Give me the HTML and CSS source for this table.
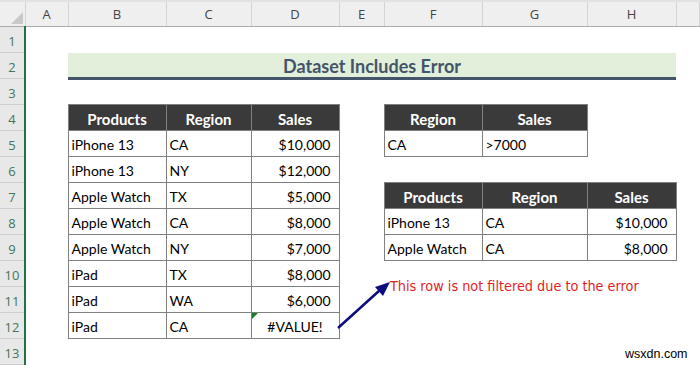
FILE: index.html
```html
<!DOCTYPE html>
<html>
  <head>
    <title>Dataset Includes Error</title>
    <link rel="stylesheet" href="styles.css">
  </head>
  <body>
    <div class="sheet-wrap">
      <table class="sheet">
        <colgroup>
          <col class="col-rows">
          <col class="col-a">
          <col class="col-b">
          <col class="col-c">
          <col class="col-d">
          <col class="col-e">
          <col class="col-f">
          <col class="col-g">
          <col class="col-h">
          <col>
        </colgroup>
        <thead>
          <tr class="col-heads">
            <th class="corner">
              <svg width="12" height="12" viewBox="0 0 12 12"><polygon points="12,0 12,12 0,12" fill="#c9c9c9"/></svg>
            </th>
            <th>A</th>
            <th>B</th>
            <th>C</th>
            <th>D</th>
            <th>E</th>
            <th>F</th>
            <th>G</th>
            <th>H</th>
            <th></th>
          </tr>
        </thead>
        <tbody>
          <tr>
            <th class="row-num">1</th>
            <td></td><td></td><td></td><td></td><td></td><td></td><td></td><td></td><td></td>
          </tr>
          <tr>
            <th class="row-num">2</th>
            <td></td>
            <td class="title" colspan="7">Dataset Includes Error</td>
            <td></td>
          </tr>
          <tr>
            <th class="row-num">3</th>
            <td></td><td></td><td></td><td></td><td></td><td></td><td></td><td></td><td></td>
          </tr>
          <tr>
            <th class="row-num">4</th>
            <td></td>
            <td class="head">Products</td>
            <td class="head">Region</td>
            <td class="head">Sales</td>
            <td></td>
            <td class="head">Region</td>
            <td class="head">Sales</td>
            <td></td><td></td>
          </tr>
          <tr>
            <th class="row-num">5</th>
            <td></td>
            <td class="cell">iPhone 13</td>
            <td class="cell">CA</td>
            <td class="cell money">$10,000</td>
            <td></td>
            <td class="cell">CA</td>
            <td class="cell">&gt;7000</td>
            <td></td><td></td>
          </tr>
          <tr>
            <th class="row-num">6</th>
            <td></td>
            <td class="cell">iPhone 13</td>
            <td class="cell">NY</td>
            <td class="cell money">$12,000</td>
            <td></td><td></td><td></td><td></td><td></td>
          </tr>
          <tr>
            <th class="row-num">7</th>
            <td></td>
            <td class="cell">Apple Watch</td>
            <td class="cell">TX</td>
            <td class="cell money">$5,000</td>
            <td></td>
            <td class="head">Products</td>
            <td class="head">Region</td>
            <td class="head">Sales</td>
            <td></td>
          </tr>
          <tr>
            <th class="row-num">8</th>
            <td></td>
            <td class="cell">Apple Watch</td>
            <td class="cell">CA</td>
            <td class="cell money">$8,000</td>
            <td></td>
            <td class="cell">iPhone 13</td>
            <td class="cell">CA</td>
            <td class="cell money">$10,000</td>
            <td></td>
          </tr>
          <tr>
            <th class="row-num">9</th>
            <td></td>
            <td class="cell">Apple Watch</td>
            <td class="cell">NY</td>
            <td class="cell money">$7,000</td>
            <td></td>
            <td class="cell">Apple Watch</td>
            <td class="cell">CA</td>
            <td class="cell money">$8,000</td>
            <td></td>
          </tr>
          <tr>
            <th class="row-num">10</th>
            <td></td>
            <td class="cell">iPad</td>
            <td class="cell">TX</td>
            <td class="cell money">$8,000</td>
            <td></td><td></td><td></td><td></td><td></td>
          </tr>
          <tr>
            <th class="row-num">11</th>
            <td></td>
            <td class="cell">iPad</td>
            <td class="cell">WA</td>
            <td class="cell money">$6,000</td>
            <td></td><td></td><td></td><td></td><td></td>
          </tr>
          <tr>
            <th class="row-num">12</th>
            <td></td>
            <td class="cell">iPad</td>
            <td class="cell">CA</td>
            <td class="cell error">#VALUE!</td>
            <td></td><td></td><td></td><td></td><td></td>
          </tr>
          <tr>
            <th class="row-num">13</th>
            <td></td><td></td><td></td><td></td><td></td><td></td><td></td><td></td><td></td>
          </tr>
        </tbody>
      </table>

      <!-- callout drawn over the sheet -->
      <svg class="arrow" width="700" height="365" viewBox="0 0 700 365">
        <line x1="338" y1="328" x2="380" y2="290" stroke="#0c0c7c" stroke-width="2.5"/>
        <polygon points="390,282 375,287 383,296" fill="#0c0c7c"/>
      </svg>
      <div class="note">This row is not filtered due to the error</div>
      <div class="watermark">wsxdn.com</div>
    </div>
  </body>
</html>
```

FILE: styles.css
```css
body {
  margin: 0;
  background-color: white;
  overflow: hidden;
}

.sheet-wrap {
  position: relative;
  width: 700px;
  height: 365px;
  overflow: hidden;
}

.sheet {
  border-collapse: collapse;
  table-layout: fixed;
  width: 700px;
  font-family: Lato, "Liberation Sans", sans-serif;
}

.col-rows { width: 25px; }
.col-a { width: 43px; }
.col-b { width: 98px; }
.col-c { width: 85px; }
.col-d { width: 88px; }
.col-e { width: 45px; }
.col-f { width: 98px; }
.col-g { width: 105px; }
.col-h { width: 89px; }

.sheet tbody tr {
  height: 26px;
}

.col-heads th {
  height: 24px;
  padding: 0;
  line-height: 16px;
  background-color: rgb(239, 239, 239);
  border-top: 2px solid rgb(226, 226, 226);
  border-right: 1px solid rgb(212, 212, 212);
  border-bottom: 1px solid rgb(171, 171, 171);
  font-family: "Open Sans", sans-serif;
  font-weight: normal;
  font-size: 13px;
  color: rgb(68, 68, 68);
}

.corner {
  text-align: right;
  vertical-align: bottom;
}

.corner svg {
  display: block;
  margin: 0 2px 2px auto;
}

.sheet td {
  padding: 2px 3px 0;
  line-height: 18px;
  font-size: 14px;
  color: black;
  white-space: nowrap;
  overflow: visible;
}

.row-num {
  padding: 2px 0 0;
  line-height: 16px;
  background-color: rgb(232, 232, 232);
  border-bottom: 1px solid rgb(206, 206, 206);
  border-right: 2px solid rgb(33, 115, 70);
  font-family: "Open Sans", sans-serif;
  font-weight: normal;
  font-size: 13px;
  color: rgb(70, 118, 86);
  text-align: center;
}

.sheet td.title {
  background-color: rgb(226, 239, 218);
  border-bottom: 3px solid rgb(68, 84, 106);
  color: rgb(68, 84, 106);
  font-weight: bold;
  font-size: 18px;
  text-align: center;
}

.sheet td.head {
  background-color: rgb(58, 58, 58);
  border: 1px solid rgb(128, 128, 128);
  color: white;
  font-weight: bold;
  font-size: 15px;
  text-align: center;
}

.sheet td.cell {
  border: 1px solid rgb(128, 128, 128);
}

.sheet td.money {
  text-align: right;
  padding-right: 8px;
}

.sheet td.error {
  position: relative;
  text-align: center;
}

/* green error marker in the corner of the cell */
.sheet td.error::before {
  content: "";
  position: absolute;
  top: 0;
  left: 0;
  border-top: 6px solid rgb(30, 125, 40);
  border-right: 6px solid transparent;
}

.arrow {
  position: absolute;
  top: 0;
  left: 0;
}

.note {
  position: absolute;
  left: 390px;
  top: 278px;
  font-family: "DejaVu Sans Condensed", "DejaVu Sans", sans-serif;
  font-size: 14.3px;
  color: rgb(226, 30, 36);
}

.watermark {
  position: absolute;
  left: 625px;
  top: 347px;
  font-family: "Liberation Sans", sans-serif;
  font-size: 12.5px;
  color: black;
}
```
